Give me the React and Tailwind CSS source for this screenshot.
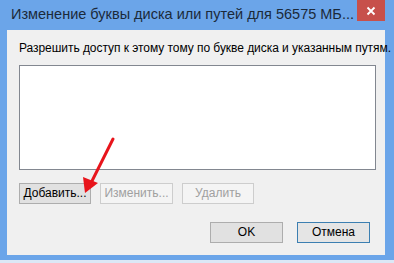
export default function App() {
  const font = { fontFamily: '"Liberation Sans", Arial, sans-serif' };
  return (
    <div className="w-[394px] h-[263px] bg-[#dbe8f6] overflow-hidden" style={font}>
      <div className="w-[394px] h-[260px] bg-[#6ba5e9] pl-[7px] pr-[9px] flex flex-col">
        <div className="h-[30px] flex justify-between items-start">
          <div className="min-w-0 overflow-hidden pl-[4px] pt-[5px] text-[14.5px] leading-[18px] text-[#1b2a3a] whitespace-nowrap">
            Изменение буквы диска или путей для 56575 МБ...
          </div>
          <div className="shrink-0 w-[28px] h-[21px] bg-[#c7504b] flex items-center justify-center">
            <svg width="10" height="10" viewBox="0 0 10 10">
              <path d="M1.5 1.5 L8.5 8.5 M8.5 1.5 L1.5 8.5" stroke="white" strokeWidth="1.8" />
            </svg>
          </div>
        </div>
        <div className="relative h-[225px] bg-[#f0f0f0] pl-[12px] pt-[11px] text-[12px] leading-[15px] text-black">
          <div className="whitespace-nowrap tracking-[-0.05px]">Разрешить доступ к этому тому по букве диска и указанным путям.</div>
          <div className="mt-[9px] w-[357px] h-[105px] bg-white border border-[#828790]"></div>
          <div className="mt-[13px] flex gap-[9px]">
            <div className="w-[72px] h-[21px] bg-[#e1e1e1] border border-[#adadad] flex items-center justify-center">Добавить...</div>
            <div className="w-[73px] h-[21px] bg-[#f4f4f4] border border-[#cdcdcd] text-[#a0a0a0] flex items-center justify-center">Изменить...</div>
            <div className="w-[72px] h-[21px] bg-[#f4f4f4] border border-[#cdcdcd] text-[#a0a0a0] flex items-center justify-center">Удалить</div>
          </div>
          <div className="mt-[18px] flex justify-end gap-[14px] pr-[15px]">
            <div className="w-[73px] h-[21px] bg-[#e1e1e1] border border-[#adadad] flex items-center justify-center">OK</div>
            <div className="w-[73px] h-[21px] bg-[#e5e5e5] border border-[#3c7fb1] flex items-center justify-center">Отмена</div>
          </div>
          <svg className="absolute left-0 top-0 pointer-events-none" width="378" height="225" viewBox="0 0 378 225">
            <path d="M106 109 L85 151" stroke="#e8141b" strokeWidth="3" strokeLinecap="round" fill="none" />
            <path d="M78 163 L76 147 L91 153 Z" fill="#e8141b" />
          </svg>
        </div>
      </div>
    </div>
  );
}
